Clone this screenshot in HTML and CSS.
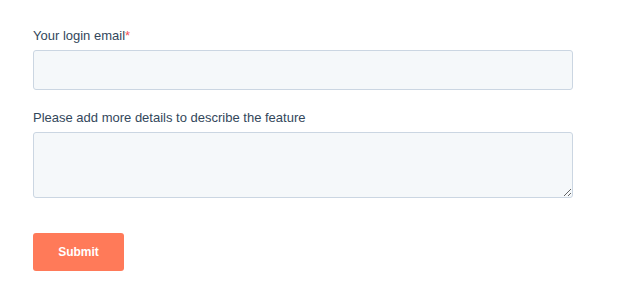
FILE: index.html
```html
<!DOCTYPE html>
<html>
<head>
<meta charset="utf-8">
<link rel="stylesheet" href="styles.css">
</head>
<body>
<form class="form">
  <div class="field">
    <label class="label">Your login email<span class="req">*</span></label>
    <input class="input" type="email">
  </div>
  <div class="field">
    <label class="label">Please add more details to describe the feature</label>
    <textarea class="textarea"></textarea>
  </div>
  <div class="actions">
    <button class="submit" type="button">Submit</button>
  </div>
</form>
</body>
</html>
```
FILE: styles.css
```css
html, body {
  margin: 0;
  padding: 0;
  background: #ffffff;
}
body {
  font-family: "Liberation Sans", Arial, sans-serif;
}
.form {
  padding: 28px 33px 0 33px;
  width: 540px;
  display: flex;
  flex-direction: column;
}
.field {
  display: flex;
  flex-direction: column;
  margin-bottom: 20px;
}
.label {
  font-size: 13px;
  line-height: 16px;
  color: #33475b;
  margin-bottom: 6px;
}
.req {
  color: #f2545b;
}
.input, .textarea {
  box-sizing: border-box;
  width: 540px;
  border: 1px solid #cbd6e2;
  border-radius: 3px;
  background: #f5f8fa;
  margin: 0;
  padding: 0 10px;
  font-family: inherit;
  font-size: 14px;
  outline: none;
}
.input {
  height: 40px;
}
.textarea {
  height: 66px;
  display: block;
  resize: vertical;
}
.actions {
  padding-top: 15px;
}
.submit {
  width: 91px;
  height: 38px;
  border: none;
  border-radius: 3px;
  background: #ff7a59;
  color: #ffffff;
  font-family: inherit;
  font-weight: bold;
  font-size: 12px;
  padding: 0;
}
```
